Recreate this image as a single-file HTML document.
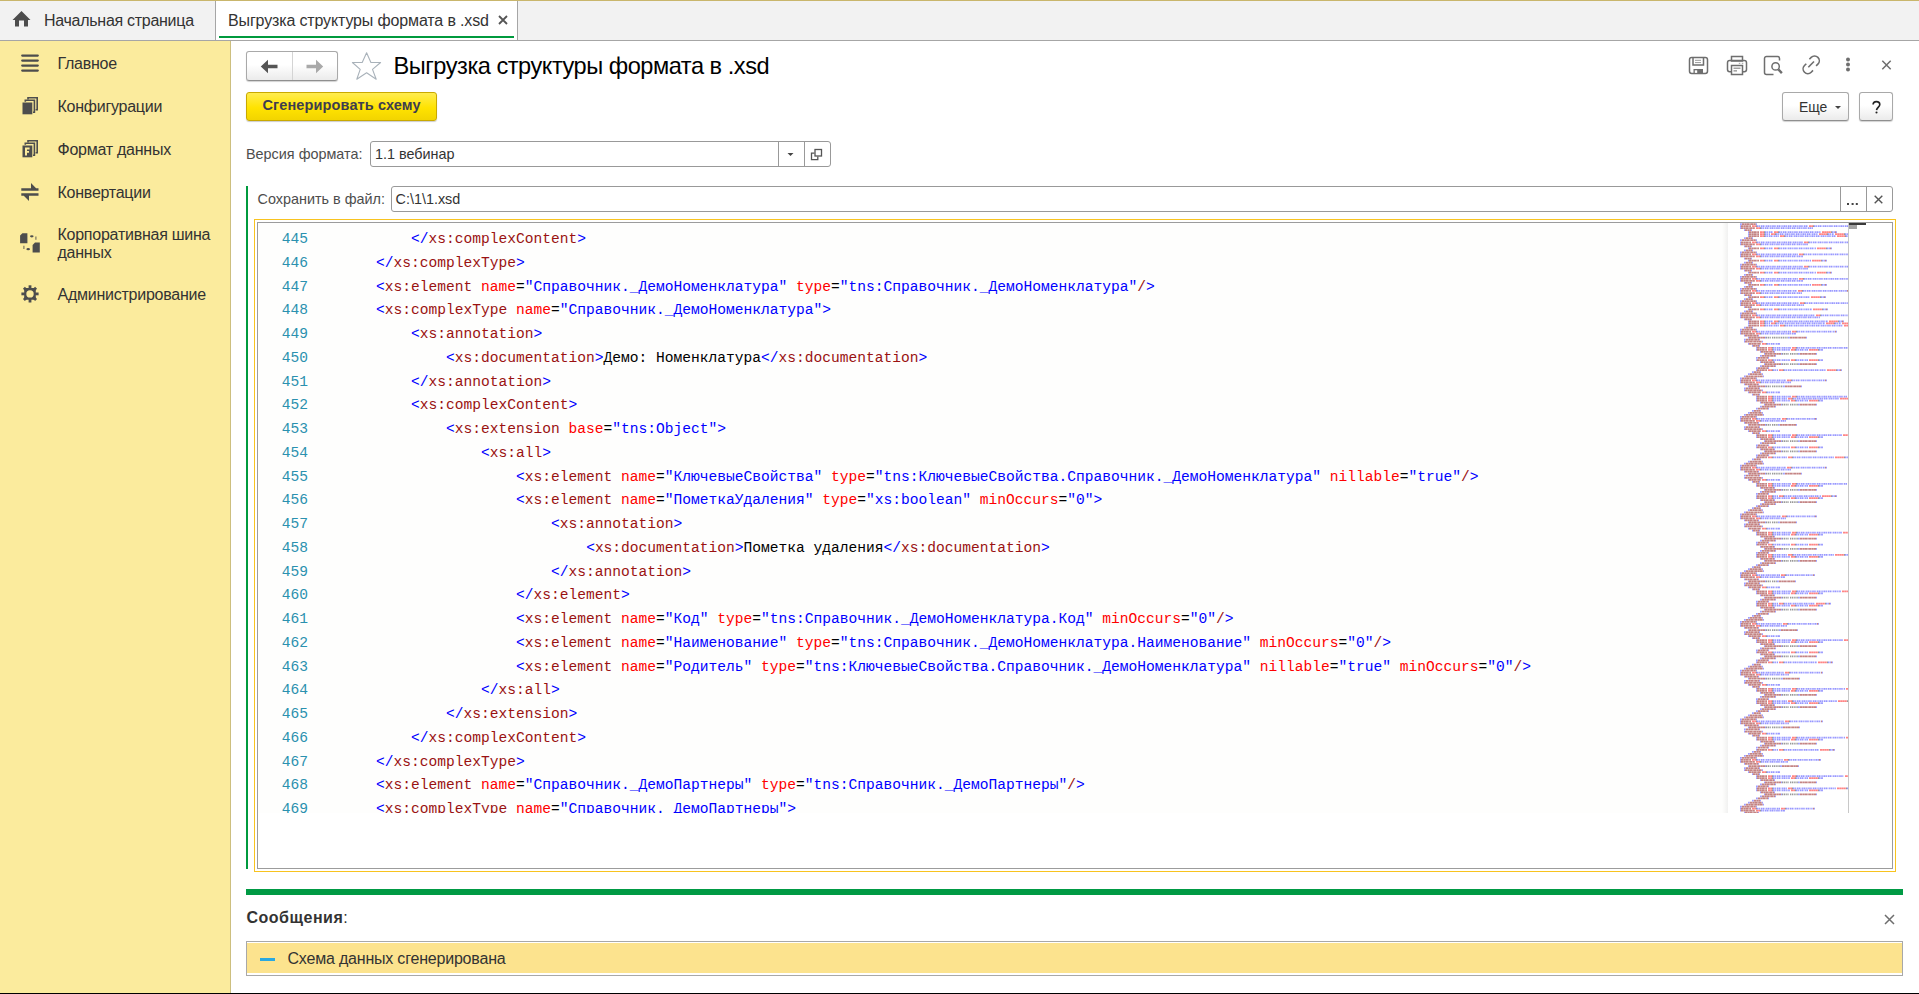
<!DOCTYPE html>
<html><head><meta charset="utf-8">
<style>
*{box-sizing:border-box}
html,body{margin:0;padding:0}
body{width:1919px;height:994px;overflow:hidden;position:relative;background:#fff;font-family:"Liberation Sans",sans-serif;color:#333}
.a{position:absolute}
.t{position:absolute;white-space:pre;line-height:1}
.ln{position:absolute;left:260px;width:48px;text-align:right;font-family:"Liberation Mono",monospace;font-size:14.59px;line-height:17px;color:#2B91AF;white-space:pre}
.cl{position:absolute;font-family:"Liberation Mono",monospace;font-size:14.59px;line-height:17px;white-space:pre;color:#000}
.cl i{font-style:normal}
.xb{color:#0000FF}
.xt{color:#9A1212}
.xa{color:#FF0000}
.xv{color:#0000FF}
.xk{color:#000}
.side{font-size:16px;letter-spacing:-0.25px;color:#333}
.btn{position:absolute;border:1px solid #A9A9A9;border-bottom-color:#8F8F8F;border-radius:3px;background:linear-gradient(#fff 0%,#fff 45%,#EBEBEB 100%);box-shadow:0 1px 1px rgba(0,0,0,0.18)}
</style></head><body>

<!-- top tab bar -->
<div class="a" style="left:0;top:0;width:1919px;height:41px;background:#F2F2F2;border-top:1px solid #C9B66C;border-bottom:1px solid #A6A6A6"></div>
<div class="a" style="left:215px;top:1px;width:1px;height:39px;background:#A6A6A6"></div>
<div class="a" style="left:216px;top:1px;width:301px;height:39px;background:#fff"></div>
<div class="a" style="left:517px;top:1px;width:1px;height:39px;background:#A6A6A6"></div>
<div class="a" style="left:219px;top:36px;width:295px;height:2px;background:#009A3E"></div>
<svg class="a" style="left:12px;top:11px" width="19" height="16" viewBox="0 0 19 16"><path d="M9.5 0 L18.5 9 L16 9 L16 15.5 L12 15.5 L12 9.5 L7 9.5 L7 15.5 L3 15.5 L3 9 L0.5 9 Z" fill="#4D4D4D"/></svg>
<div class="t" style="left:44px;top:12.5px;font-size:16px;letter-spacing:-0.28px;color:#333">Начальная страница</div>
<div class="t" style="left:228px;top:12.5px;font-size:16px;letter-spacing:-0.14px;color:#333">Выгрузка структуры формата в .xsd</div>
<svg class="a" style="left:498px;top:15px" width="10" height="10" viewBox="0 0 10 10"><path d="M1 1 L9 9 M9 1 L1 9" stroke="#555" stroke-width="1.8"/></svg>

<!-- sidebar -->
<div class="a" style="left:0;top:41px;width:231px;height:953px;background:#FBEB9D;border-right:1px solid #CDBF7F"></div>
<svg class="a" style="left:21px;top:54px" width="18" height="18" viewBox="0 0 18 18"><g stroke="#4D4D4D" stroke-width="2.2" stroke-linecap="round"><path d="M1.2 1.6H16.8M1.2 6.6H16.8M1.2 11.6H16.8M1.2 16.6H16.8"/></g></svg>
<div class="t side" style="left:57.5px;top:56.4px">Главное</div>
<svg class="a" style="left:22px;top:97px" width="17" height="18" viewBox="0 0 17 18"><g fill="none" stroke="#4D4D4D" stroke-width="1.6"><path d="M6 2.5V0.8H15.2V12.8H13.6"/><path d="M3.3 4.8V3.3H12.4V15.3H11"/></g><rect x="0.5" y="5.5" width="9.8" height="11.8" fill="#4D4D4D"/></svg>
<div class="t side" style="left:57.5px;top:99.3px">Конфигурации</div>
<svg class="a" style="left:22px;top:140px" width="17" height="18" viewBox="0 0 17 18"><g fill="none" stroke="#4D4D4D" stroke-width="1.6"><path d="M6 2.5V0.8H15.2V12.8H13.6"/><path d="M3.3 4.8V3.3H12.4V15.3H11"/></g><rect x="0.5" y="5.5" width="9.8" height="11.8" fill="#4D4D4D"/><path d="M3 7.5H7.6V9.4H5V10.9H7V12.7H5V15.4H3Z" fill="#FBEB9D"/></svg>
<div class="t side" style="left:57.5px;top:142.4px">Формат данных</div>
<svg class="a" style="left:21px;top:183px" width="18" height="18" viewBox="0 0 18 18"><path d="M0.3 5.3H17.5V7.8H0.3Z M10 0 L17.5 7.8 L10 7.8Z" fill="#4D4D4D"/><path d="M0.3 10.2H17.5V12.7H0.3Z M8 18 L0.3 10.2 L8 10.2Z" fill="#4D4D4D"/></svg>
<div class="t side" style="left:57.5px;top:185.4px">Конвертации</div>
<svg class="a" style="left:20px;top:233px" width="21" height="21" viewBox="0 0 21 21"><g fill="#4D4D4D"><path d="M2.4 0.2H7.4V10.2H0.1V2.6Z"/><path d="M15 9.6H19.8V19.6H12.6V12Z"/><ellipse cx="11.8" cy="3.3" rx="1.8" ry="1.15"/><ellipse cx="8.2" cy="16.2" rx="1.8" ry="1.15"/></g><g stroke="#4D4D4D" stroke-width="1.1" stroke-opacity="0.8"><path d="M15.9 3.6V6.8"/><path d="M3.9 12.8V16"/></g></svg>
<div class="t side" style="left:57.5px;top:227.1px">Корпоративная шина</div>
<div class="t side" style="left:57.5px;top:245.2px">данных</div>
<svg class="a" style="left:21px;top:285px" width="18" height="18" viewBox="0 0 18 18"><g fill="#4D4D4D"><rect x="3.2" y="3.1" width="11.6" height="11.6" rx="1.6"/><g id="gt"><rect x="7.6" y="0.3" width="2.8" height="4.2"/></g><use href="#gt" transform="rotate(45 9 8.9)"/><use href="#gt" transform="rotate(90 9 8.9)"/><use href="#gt" transform="rotate(135 9 8.9)"/><use href="#gt" transform="rotate(180 9 8.9)"/><use href="#gt" transform="rotate(225 9 8.9)"/><use href="#gt" transform="rotate(270 9 8.9)"/><use href="#gt" transform="rotate(315 9 8.9)"/></g><circle cx="9" cy="8.9" r="3.7" fill="#FBEB9D"/></svg>
<div class="t side" style="left:57.5px;top:286.9px">Администрирование</div>

<!-- header of form -->
<div class="btn" style="left:246px;top:51px;width:92px;height:30px"></div>
<div class="a" style="left:292px;top:52px;width:1px;height:28px;background:#D4D4D4"></div>
<svg class="a" style="left:260px;top:59px" width="19" height="15" viewBox="0 0 19 15"><path d="M0.8 7.5 L8 0.8 L8 5.8 L17.5 5.8 L17.5 9.2 L8 9.2 L8 14.2 Z" fill="#555"/></svg>
<svg class="a" style="left:305px;top:59px" width="19" height="15" viewBox="0 0 19 15"><path d="M18.2 7.5 L11 0.8 L11 5.8 L1.5 5.8 L1.5 9.2 L11 9.2 L11 14.2 Z" fill="#A9A9A9"/></svg>
<svg class="a" style="left:351px;top:52px" width="31" height="29" viewBox="0 0 31 29"><path d="M15.6 0.8 L19.9 10.5 L29.6 10.5 L21.5 17.4 L25.2 27.2 L15.6 20.8 L5.8 27.2 L9.2 17.4 L1.4 10.5 L11.2 10.5 Z" fill="none" stroke="#A9B2BA" stroke-width="1.1" stroke-linejoin="round"/></svg>
<div class="t" style="left:393.5px;top:54.8px;font-size:23.6px;letter-spacing:-0.48px;color:#000">Выгрузка структуры формата в .xsd</div>

<!-- right toolbar icons -->
<svg class="a" style="left:1688px;top:56px" width="21" height="19" viewBox="0 0 21 19"><rect x="1.5" y="1.5" width="18" height="16" rx="2.2" fill="none" stroke="#6E6E6E" stroke-width="1.5"/><path d="M5 1.5V9H15.5V1.5" fill="none" stroke="#6E6E6E" stroke-width="1.5"/><path d="M7 4.3H13M7 6.6H13" stroke="#9A9A9A" stroke-width="1"/><rect x="5.5" y="13" width="9.5" height="4.5" fill="#6E6E6E"/><rect x="6.8" y="14.3" width="2.4" height="2.6" fill="#fff"/></svg>
<svg class="a" style="left:1726px;top:55px" width="22" height="21" viewBox="0 0 22 21"><rect x="5.5" y="1.5" width="11" height="4.5" fill="none" stroke="#6E6E6E" stroke-width="1.5"/><rect x="1.5" y="5.5" width="19" height="11.2" rx="2.2" fill="none" stroke="#6E6E6E" stroke-width="1.5"/><rect x="5.5" y="10.5" width="11" height="9" fill="#fff" stroke="#6E6E6E" stroke-width="1.5"/><path d="M7.5 13.2H14.5" stroke="#8A8A8A" stroke-width="1.2"/><path d="M7.5 15.9H11" stroke="#6E6E6E" stroke-width="1"/><path d="M12.8 8.3H14.3M15.8 8.3H17.3" stroke="#9A9A9A" stroke-width="1"/></svg>
<svg class="a" style="left:1763px;top:55px" width="22" height="21" viewBox="0 0 22 21"><path d="M10.5 19.5H3.5A2 2 0 0 1 1.5 17.5V3.5A2 2 0 0 1 3.5 1.5H14.5A2 2 0 0 1 16.5 3.5V5.5" fill="none" stroke="#6E6E6E" stroke-width="1.5"/><circle cx="12.6" cy="11.4" r="3.7" fill="none" stroke="#6E6E6E" stroke-width="1.5"/><path d="M15.3 14.3L18.9 18.1" stroke="#6E6E6E" stroke-width="2.4"/></svg>
<svg class="a" style="left:1801px;top:55px" width="21" height="20" viewBox="0 0 21 20"><g fill="none" stroke="#6E6E6E" stroke-width="1.6" stroke-linecap="butt"><path d="M8.4 4.2 L10.2 2.4 A4.3 4.3 0 0 1 16.9 9.1 L15.1 10.9"/><path d="M12 15.4 L10.2 17.2 A4.3 4.3 0 0 1 3.5 10.5 L5.3 8.7"/><path d="M7.3 12.2 L13 6.5"/></g></svg>
<svg class="a" style="left:1844px;top:55px" width="8" height="19" viewBox="0 0 8 19"><g fill="#6E6E6E"><circle cx="4" cy="4.5" r="2"/><circle cx="4" cy="9.5" r="2"/><circle cx="4" cy="14.5" r="2"/></g></svg>
<svg class="a" style="left:1881px;top:60px" width="11" height="11" viewBox="0 0 11 11"><path d="M1.3 0.8 L9.7 9.2 M9.7 0.8 L1.3 9.2" stroke="#6E6E6E" stroke-width="1.5"/></svg>

<!-- command bar -->
<div class="a" style="left:246px;top:92px;width:191px;height:29px;border:1px solid #C9A900;border-radius:3px;background:linear-gradient(#FFEC4F 0%,#FFE300 55%,#F2D400 100%);box-shadow:0 1px 1px rgba(0,0,0,0.2)"></div>
<div class="t" style="left:262.5px;top:97.9px;font-size:14.5px;font-weight:bold;letter-spacing:0.13px;color:#3D3D4F">Сгенерировать схему</div>

<div class="btn" style="left:1782px;top:92px;width:67px;height:29px"></div>
<div class="t" style="left:1798.5px;top:99.1px;font-size:15.3px;transform:scaleX(0.91);transform-origin:0 0;color:#333">Еще</div>
<svg class="a" style="left:1835px;top:106px" width="6" height="3" viewBox="0 0 6 3"><path d="M0 0H6L3 3Z" fill="#444"/></svg>
<div class="btn" style="left:1859px;top:92px;width:34px;height:29px"></div>
<svg class="a" style="left:1871px;top:100px" width="11" height="15" viewBox="0 0 11 15"><path d="M2.1 4.6C2.1 2.5 3.6 1.6 5.4 1.6C7.4 1.6 8.8 2.8 8.8 4.5C8.8 6.8 5.9 7.3 5.5 10.2" fill="none" stroke="#222" stroke-width="1.6"/><circle cx="5.5" cy="12.5" r="1.05" fill="#222"/></svg>

<!-- version row -->
<div class="t" style="left:246px;top:146.5px;font-size:14.4px;color:#4D4D4D">Версия формата:</div>
<div class="a" style="left:370px;top:141px;width:461px;height:26px;border:1px solid #999;border-radius:3px;background:#fff"></div>
<div class="a" style="left:778px;top:142px;width:1px;height:24px;background:#999"></div>
<div class="a" style="left:804px;top:142px;width:1px;height:24px;background:#999"></div>
<div class="t" style="left:375px;top:146.5px;font-size:14.4px;color:#333">1.1 вебинар</div>
<svg class="a" style="left:787px;top:152px" width="7" height="5" viewBox="0 0 7 5"><path d="M0.5 1H6.5L3.5 4Z" fill="#444"/></svg>
<svg class="a" style="left:810px;top:148px" width="13" height="13" viewBox="0 0 13 13"><rect x="5" y="1.5" width="6.5" height="6.5" fill="none" stroke="#555" stroke-width="1.3"/><path d="M7.8 8.5V11.6H1.5V5.2H4.5" fill="none" stroke="#555" stroke-width="1.3"/></svg>

<!-- save row -->
<div class="a" style="left:246px;top:186px;width:2px;height:683px;background:#009A3E"></div>
<div class="t" style="left:257.5px;top:191.5px;font-size:14.4px;color:#4D4D4D">Сохранить в файл:</div>
<div class="a" style="left:391px;top:186px;width:1502px;height:26px;border:1px solid #999;border-radius:3px;background:#fff"></div>
<div class="a" style="left:1840px;top:187px;width:1px;height:24px;background:#999"></div>
<div class="a" style="left:1866px;top:187px;width:1px;height:24px;background:#999"></div>
<div class="t" style="left:395.5px;top:191.5px;font-size:14.4px;color:#333">C:\1\1.xsd</div>
<svg class="a" style="left:1846px;top:202px" width="13" height="4" viewBox="0 0 13 4"><g fill="#444"><rect x="1" y="1" width="2" height="2"/><rect x="5.6" y="1" width="2" height="2"/><rect x="9.8" y="1" width="2" height="2"/></g></svg>
<svg class="a" style="left:1874px;top:195px" width="9" height="9" viewBox="0 0 9 9"><path d="M0.7 0.7 L8.3 8.3 M8.3 0.7 L0.7 8.3" stroke="#555" stroke-width="1.4"/></svg>

<!-- editor -->
<div class="a" style="left:254px;top:219px;width:1642px;height:653px;border:1px solid #F8C31F"></div>
<div class="a" style="left:257px;top:222px;width:1636px;height:647px;border:1px solid #9C9C9C;background:#fff"></div>
<div class="a" style="left:258px;top:223px;width:1634px;height:4px;background:linear-gradient(rgba(0,0,0,0.05),rgba(0,0,0,0))"></div>
<div class="a" style="left:258px;top:223px;width:1470px;height:590px;overflow:hidden;background:#FEFEFD">
<div class="a" style="left:-258px;top:-223px;width:1919px;height:994px">
<div class="ln" style="top:231.00px">445</div>
<div class="cl" style="top:231.00px;left:411.04px"><i class="xb">&lt;/</i><i class="xt">xs:complexContent</i><i class="xb">&gt;</i></div>
<div class="ln" style="top:254.75px">446</div>
<div class="cl" style="top:254.75px;left:376.02px"><i class="xb">&lt;/</i><i class="xt">xs:complexType</i><i class="xb">&gt;</i></div>
<div class="ln" style="top:278.50px">447</div>
<div class="cl" style="top:278.50px;left:376.02px"><i class="xb">&lt;</i><i class="xt">xs:element</i><i class="xk"> </i><i class="xa">name</i><i class="xk">=</i><i class="xv">"Справочник._ДемоНоменклатура"</i><i class="xk"> </i><i class="xa">type</i><i class="xk">=</i><i class="xv">"tns:Справочник._ДемоНоменклатура"</i><i class="xt">/</i><i class="xb">&gt;</i></div>
<div class="ln" style="top:302.25px">448</div>
<div class="cl" style="top:302.25px;left:376.02px"><i class="xb">&lt;</i><i class="xt">xs:complexType</i><i class="xk"> </i><i class="xa">name</i><i class="xk">=</i><i class="xv">"Справочник._ДемоНоменклатура"</i><i class="xb">&gt;</i></div>
<div class="ln" style="top:326.00px">449</div>
<div class="cl" style="top:326.00px;left:411.04px"><i class="xb">&lt;</i><i class="xt">xs:annotation</i><i class="xb">&gt;</i></div>
<div class="ln" style="top:349.75px">450</div>
<div class="cl" style="top:349.75px;left:446.06px"><i class="xb">&lt;</i><i class="xt">xs:documentation</i><i class="xb">&gt;</i><i class="xk">Демо: Номенклатура</i><i class="xb">&lt;/</i><i class="xt">xs:documentation</i><i class="xb">&gt;</i></div>
<div class="ln" style="top:373.50px">451</div>
<div class="cl" style="top:373.50px;left:411.04px"><i class="xb">&lt;/</i><i class="xt">xs:annotation</i><i class="xb">&gt;</i></div>
<div class="ln" style="top:397.25px">452</div>
<div class="cl" style="top:397.25px;left:411.04px"><i class="xb">&lt;</i><i class="xt">xs:complexContent</i><i class="xb">&gt;</i></div>
<div class="ln" style="top:421.00px">453</div>
<div class="cl" style="top:421.00px;left:446.06px"><i class="xb">&lt;</i><i class="xt">xs:extension</i><i class="xk"> </i><i class="xa">base</i><i class="xk">=</i><i class="xv">"tns:Object"</i><i class="xb">&gt;</i></div>
<div class="ln" style="top:444.75px">454</div>
<div class="cl" style="top:444.75px;left:481.08px"><i class="xb">&lt;</i><i class="xt">xs:all</i><i class="xb">&gt;</i></div>
<div class="ln" style="top:468.50px">455</div>
<div class="cl" style="top:468.50px;left:516.10px"><i class="xb">&lt;</i><i class="xt">xs:element</i><i class="xk"> </i><i class="xa">name</i><i class="xk">=</i><i class="xv">"КлючевыеСвойства"</i><i class="xk"> </i><i class="xa">type</i><i class="xk">=</i><i class="xv">"tns:КлючевыеСвойства.Справочник._ДемоНоменклатура"</i><i class="xk"> </i><i class="xa">nillable</i><i class="xk">=</i><i class="xv">"true"</i><i class="xt">/</i><i class="xb">&gt;</i></div>
<div class="ln" style="top:492.25px">456</div>
<div class="cl" style="top:492.25px;left:516.10px"><i class="xb">&lt;</i><i class="xt">xs:element</i><i class="xk"> </i><i class="xa">name</i><i class="xk">=</i><i class="xv">"ПометкаУдаления"</i><i class="xk"> </i><i class="xa">type</i><i class="xk">=</i><i class="xv">"xs:boolean"</i><i class="xk"> </i><i class="xa">minOccurs</i><i class="xk">=</i><i class="xv">"0"</i><i class="xb">&gt;</i></div>
<div class="ln" style="top:516.00px">457</div>
<div class="cl" style="top:516.00px;left:551.12px"><i class="xb">&lt;</i><i class="xt">xs:annotation</i><i class="xb">&gt;</i></div>
<div class="ln" style="top:539.75px">458</div>
<div class="cl" style="top:539.75px;left:586.14px"><i class="xb">&lt;</i><i class="xt">xs:documentation</i><i class="xb">&gt;</i><i class="xk">Пометка удаления</i><i class="xb">&lt;/</i><i class="xt">xs:documentation</i><i class="xb">&gt;</i></div>
<div class="ln" style="top:563.50px">459</div>
<div class="cl" style="top:563.50px;left:551.12px"><i class="xb">&lt;/</i><i class="xt">xs:annotation</i><i class="xb">&gt;</i></div>
<div class="ln" style="top:587.25px">460</div>
<div class="cl" style="top:587.25px;left:516.10px"><i class="xb">&lt;/</i><i class="xt">xs:element</i><i class="xb">&gt;</i></div>
<div class="ln" style="top:611.00px">461</div>
<div class="cl" style="top:611.00px;left:516.10px"><i class="xb">&lt;</i><i class="xt">xs:element</i><i class="xk"> </i><i class="xa">name</i><i class="xk">=</i><i class="xv">"Код"</i><i class="xk"> </i><i class="xa">type</i><i class="xk">=</i><i class="xv">"tns:Справочник._ДемоНоменклатура.Код"</i><i class="xk"> </i><i class="xa">minOccurs</i><i class="xk">=</i><i class="xv">"0"</i><i class="xt">/</i><i class="xb">&gt;</i></div>
<div class="ln" style="top:634.75px">462</div>
<div class="cl" style="top:634.75px;left:516.10px"><i class="xb">&lt;</i><i class="xt">xs:element</i><i class="xk"> </i><i class="xa">name</i><i class="xk">=</i><i class="xv">"Наименование"</i><i class="xk"> </i><i class="xa">type</i><i class="xk">=</i><i class="xv">"tns:Справочник._ДемоНоменклатура.Наименование"</i><i class="xk"> </i><i class="xa">minOccurs</i><i class="xk">=</i><i class="xv">"0"</i><i class="xt">/</i><i class="xb">&gt;</i></div>
<div class="ln" style="top:658.50px">463</div>
<div class="cl" style="top:658.50px;left:516.10px"><i class="xb">&lt;</i><i class="xt">xs:element</i><i class="xk"> </i><i class="xa">name</i><i class="xk">=</i><i class="xv">"Родитель"</i><i class="xk"> </i><i class="xa">type</i><i class="xk">=</i><i class="xv">"tns:КлючевыеСвойства.Справочник._ДемоНоменклатура"</i><i class="xk"> </i><i class="xa">nillable</i><i class="xk">=</i><i class="xv">"true"</i><i class="xk"> </i><i class="xa">minOccurs</i><i class="xk">=</i><i class="xv">"0"</i><i class="xt">/</i><i class="xb">&gt;</i></div>
<div class="ln" style="top:682.25px">464</div>
<div class="cl" style="top:682.25px;left:481.08px"><i class="xb">&lt;/</i><i class="xt">xs:all</i><i class="xb">&gt;</i></div>
<div class="ln" style="top:706.00px">465</div>
<div class="cl" style="top:706.00px;left:446.06px"><i class="xb">&lt;/</i><i class="xt">xs:extension</i><i class="xb">&gt;</i></div>
<div class="ln" style="top:729.75px">466</div>
<div class="cl" style="top:729.75px;left:411.04px"><i class="xb">&lt;/</i><i class="xt">xs:complexContent</i><i class="xb">&gt;</i></div>
<div class="ln" style="top:753.50px">467</div>
<div class="cl" style="top:753.50px;left:376.02px"><i class="xb">&lt;/</i><i class="xt">xs:complexType</i><i class="xb">&gt;</i></div>
<div class="ln" style="top:777.25px">468</div>
<div class="cl" style="top:777.25px;left:376.02px"><i class="xb">&lt;</i><i class="xt">xs:element</i><i class="xk"> </i><i class="xa">name</i><i class="xk">=</i><i class="xv">"Справочник._ДемоПартнеры"</i><i class="xk"> </i><i class="xa">type</i><i class="xk">=</i><i class="xv">"tns:Справочник._ДемоПартнеры"</i><i class="xt">/</i><i class="xb">&gt;</i></div>
<div class="ln" style="top:801.00px">469</div>
<div class="cl" style="top:801.00px;left:376.02px"><i class="xb">&lt;</i><i class="xt">xs:complexType</i><i class="xk"> </i><i class="xa">name</i><i class="xk">=</i><i class="xv">"Справочник._ДемоПартнеры"</i><i class="xb">&gt;</i></div>
</div>
</div>
<!-- minimap -->
<div class="a" style="left:1722px;top:223px;width:6px;height:590px;background:linear-gradient(90deg,rgba(0,0,0,0),rgba(0,0,0,0.05))"></div>
<div class="a" style="left:1728px;top:223px;width:121px;height:590px;background:#fff;border-right:1px solid #C8C8C8;overflow:hidden"><svg width="121" height="590" viewBox="0 0 121 590" style="position:absolute;left:0;top:0"><path d="M12 1.00h2M28 1.00h1M12 3.03h1M12 5.06h1M84 5.06h1M16 7.09h1M23 7.09h1M20 9.12h1M108 9.12h1M20 11.15h1M20 13.18h1M16 15.21h2M24 15.21h1M12 17.24h2M28 17.24h1M12 19.27h1M12 21.30h1M79 21.30h1M16 23.33h1M23 23.33h1M20 25.36h1M103 25.36h1M16 27.39h2M24 27.39h1M12 29.42h2M28 29.42h1M12 31.45h1M12 33.48h1M74 33.48h1M16 35.51h1M23 35.51h1M20 37.54h1M98 37.54h1M16 39.57h2M24 39.57h1M12 41.60h2M28 41.60h1M12 43.63h1M12 45.66h1M79 45.66h1M16 47.69h1M23 47.69h1M20 49.72h1M103 49.72h1M16 51.75h2M24 51.75h1M12 53.78h2M28 53.78h1M12 55.81h1M12 57.84h1M74 57.84h1M16 59.87h1M23 59.87h1M20 61.90h1M98 61.90h1M16 63.93h2M24 63.93h1M12 65.96h2M28 65.96h1M12 67.99h1M120 67.99h1M12 70.02h1M73 70.02h1M16 72.05h1M23 72.05h1M20 74.08h1M97 74.08h1M16 76.11h2M24 76.11h1M12 78.14h2M28 78.14h1M12 80.17h1M12 82.20h1M75 82.20h1M16 84.23h1M23 84.23h1M20 86.26h1M99 86.26h1M16 88.29h2M24 88.29h1M12 90.32h2M28 90.32h1M12 92.35h1M12 94.38h1M91 94.38h1M16 96.41h1M23 96.41h1M20 98.44h1M115 98.44h1M20 100.47h1M20 102.50h1M16 104.53h2M24 104.53h1M12 106.56h2M28 106.56h1M12 108.59h1M108 108.59h1M12 110.62h1M67 110.62h1M16 112.65h1M30 112.65h1M20 114.68h1M37 114.68h1M60 114.68h2M78 114.68h1M16 116.71h2M31 116.71h1M16 118.74h1M34 118.74h1M20 120.77h1M51 120.77h1M24 122.80h1M31 122.80h1M28 124.83h1M28 126.86h1M94 126.86h1M32 128.89h1M46 128.89h1M36 130.92h1M53 130.92h1M70 130.92h2M88 130.92h1M32 132.95h2M47 132.95h1M28 134.98h2M40 134.98h1M28 137.01h1M94 137.01h1M32 139.04h1M46 139.04h1M36 141.07h1M53 141.07h1M70 141.07h2M88 141.07h1M32 143.10h2M47 143.10h1M28 145.13h2M40 145.13h1M28 147.16h1M113 147.16h1M24 149.19h2M32 149.19h1M20 151.22h2M34 151.22h1M16 153.25h2M35 153.25h1M12 155.28h2M28 155.28h1M12 157.31h1M98 157.31h1M12 159.34h1M62 159.34h1M16 161.37h1M30 161.37h1M20 163.40h1M37 163.40h1M55 163.40h2M73 163.40h1M16 165.43h2M31 165.43h1M16 167.46h1M34 167.46h1M20 169.49h1M51 169.49h1M24 171.52h1M31 171.52h1M28 173.55h1M28 175.58h1M28 177.61h1M94 177.61h1M32 179.64h1M46 179.64h1M36 181.67h1M53 181.67h1M70 181.67h2M88 181.67h1M32 183.70h2M47 183.70h1M28 185.73h2M40 185.73h1M24 187.76h2M32 187.76h1M20 189.79h2M34 189.79h1M16 191.82h2M35 191.82h1M12 193.85h2M28 193.85h1M12 195.88h1M88 195.88h1M12 197.91h1M57 197.91h1M16 199.94h1M30 199.94h1M20 201.97h1M37 201.97h1M50 201.97h2M68 201.97h1M16 204.00h2M31 204.00h1M16 206.03h1M34 206.03h1M20 208.06h1M51 208.06h1M24 210.09h1M31 210.09h1M28 212.12h1M28 214.15h1M94 214.15h1M32 216.18h1M46 216.18h1M36 218.21h1M53 218.21h1M70 218.21h2M88 218.21h1M32 220.24h2M47 220.24h1M28 222.27h2M40 222.27h1M28 224.30h1M94 224.30h1M32 226.33h1M46 226.33h1M36 228.36h1M53 228.36h1M70 228.36h2M88 228.36h1M32 230.39h2M47 230.39h1M28 232.42h2M40 232.42h1M28 234.45h1M24 236.48h2M32 236.48h1M20 238.51h2M34 238.51h1M16 240.54h2M35 240.54h1M12 242.57h2M28 242.57h1M12 244.60h1M98 244.60h1M12 246.63h1M62 246.63h1M16 248.66h1M30 248.66h1M20 250.69h1M37 250.69h1M55 250.69h2M73 250.69h1M16 252.72h2M31 252.72h1M16 254.75h1M34 254.75h1M20 256.78h1M51 256.78h1M24 258.81h1M31 258.81h1M28 260.84h1M28 262.87h1M94 262.87h1M32 264.90h1M46 264.90h1M36 266.93h1M53 266.93h1M70 266.93h2M88 266.93h1M32 268.96h2M47 268.96h1M28 270.99h2M40 270.99h1M28 273.02h1M108 273.02h1M28 275.05h1M94 275.05h1M32 277.08h1M46 277.08h1M36 279.11h1M53 279.11h1M70 279.11h2M88 279.11h1M32 281.14h2M47 281.14h1M28 283.17h2M40 283.17h1M24 285.20h2M32 285.20h1M20 287.23h2M34 287.23h1M16 289.26h2M35 289.26h1M12 291.29h2M28 291.29h1M12 293.32h1M88 293.32h1M12 295.35h1M57 295.35h1M16 297.38h1M30 297.38h1M20 299.41h1M37 299.41h1M50 299.41h2M68 299.41h1M16 301.44h2M31 301.44h1M16 303.47h1M34 303.47h1M20 305.50h1M51 305.50h1M24 307.53h1M31 307.53h1M28 309.56h1M28 311.59h1M94 311.59h1M32 313.62h1M46 313.62h1M36 315.65h1M53 315.65h1M70 315.65h2M88 315.65h1M32 317.68h2M47 317.68h1M28 319.71h2M40 319.71h1M28 321.74h1M94 321.74h1M32 323.77h1M46 323.77h1M36 325.80h1M53 325.80h1M70 325.80h2M88 325.80h1M32 327.83h2M47 327.83h1M28 329.86h2M40 329.86h1M28 331.89h1M28 333.92h1M94 333.92h1M32 335.95h1M46 335.95h1M36 337.98h1M53 337.98h1M70 337.98h2M88 337.98h1M32 340.01h2M47 340.01h1M28 342.04h2M40 342.04h1M24 344.07h2M32 344.07h1M20 346.10h2M34 346.10h1M16 348.13h2M35 348.13h1M12 350.16h2M28 350.16h1M12 352.19h1M86 352.19h1M12 354.22h1M56 354.22h1M16 356.25h1M30 356.25h1M20 358.28h1M37 358.28h1M49 358.28h2M67 358.28h1M16 360.31h2M31 360.31h1M16 362.34h1M34 362.34h1M20 364.37h1M51 364.37h1M24 366.40h1M31 366.40h1M28 368.43h1M28 370.46h1M94 370.46h1M32 372.49h1M46 372.49h1M36 374.52h1M53 374.52h1M70 374.52h2M88 374.52h1M32 376.55h2M47 376.55h1M28 378.58h2M40 378.58h1M28 380.61h1M102 380.61h1M28 382.64h1M94 382.64h1M32 384.67h1M46 384.67h1M36 386.70h1M53 386.70h1M70 386.70h2M88 386.70h1M32 388.73h2M47 388.73h1M28 390.76h2M40 390.76h1M24 392.79h2M32 392.79h1M20 394.82h2M34 394.82h1M16 396.85h2M35 396.85h1M12 398.88h2M28 398.88h1M12 400.91h1M90 400.91h1M12 402.94h1M58 402.94h1M16 404.97h1M30 404.97h1M20 407.00h1M37 407.00h1M51 407.00h2M69 407.00h1M16 409.03h2M31 409.03h1M16 411.06h1M34 411.06h1M20 413.09h1M51 413.09h1M24 415.12h1M31 415.12h1M28 417.15h1M28 419.18h1M94 419.18h1M32 421.21h1M46 421.21h1M36 423.24h1M53 423.24h1M70 423.24h2M88 423.24h1M32 425.27h2M47 425.27h1M28 427.30h2M40 427.30h1M28 429.33h1M94 429.33h1M32 431.36h1M46 431.36h1M36 433.39h1M53 433.39h1M70 433.39h2M88 433.39h1M32 435.42h2M47 435.42h1M28 437.45h2M40 437.45h1M28 439.48h1M104 439.48h1M24 441.51h2M32 441.51h1M20 443.54h2M34 443.54h1M16 445.57h2M35 445.57h1M12 447.60h2M28 447.60h1M12 449.63h1M94 449.63h1M12 451.66h1M60 451.66h1M16 453.69h1M30 453.69h1M20 455.72h1M37 455.72h1M53 455.72h2M71 455.72h1M16 457.75h2M31 457.75h1M16 459.78h1M34 459.78h1M20 461.81h1M51 461.81h1M24 463.84h1M31 463.84h1M28 465.87h1M28 467.90h1M94 467.90h1M32 469.93h1M46 469.93h1M36 471.96h1M53 471.96h1M70 471.96h2M88 471.96h1M32 473.99h2M47 473.99h1M28 476.02h2M40 476.02h1M28 478.05h1M28 480.08h1M94 480.08h1M32 482.11h1M46 482.11h1M36 484.14h1M53 484.14h1M70 484.14h2M88 484.14h1M32 486.17h2M47 486.17h1M28 488.20h2M40 488.20h1M24 490.23h2M32 490.23h1M20 492.26h2M34 492.26h1M16 494.29h2M35 494.29h1M12 496.32h2M28 496.32h1M12 498.35h1M94 498.35h1M12 500.38h1M60 500.38h1M16 502.41h1M30 502.41h1M20 504.44h1M37 504.44h1M53 504.44h2M71 504.44h1M16 506.47h2M31 506.47h1M16 508.50h1M34 508.50h1M20 510.53h1M51 510.53h1M24 512.56h1M31 512.56h1M28 514.59h1M28 516.62h1M94 516.62h1M32 518.65h1M46 518.65h1M36 520.68h1M53 520.68h1M70 520.68h2M88 520.68h1M32 522.71h2M47 522.71h1M28 524.74h2M40 524.74h1M28 526.77h1M106 526.77h1M24 528.80h2M32 528.80h1M20 530.83h2M34 530.83h1M16 532.86h2M35 532.86h1M12 534.89h2M28 534.89h1M12 536.92h1M92 536.92h1M12 538.95h1M59 538.95h1M16 540.98h1M30 540.98h1M20 543.01h1M37 543.01h1M52 543.01h2M70 543.01h1M16 545.04h2M31 545.04h1M16 547.07h1M34 547.07h1M20 549.10h1M51 549.10h1M24 551.13h1M31 551.13h1M28 553.16h1M28 555.19h1M94 555.19h1M32 557.22h1M46 557.22h1M36 559.25h1M53 559.25h1M70 559.25h2M88 559.25h1M32 561.28h2M47 561.28h1M28 563.31h2M40 563.31h1M28 565.34h1M28 567.37h1M94 567.37h1M32 569.40h1M46 569.40h1M36 571.43h1M53 571.43h1M70 571.43h2M88 571.43h1M32 573.46h2M47 573.46h1M28 575.49h2M40 575.49h1M24 577.52h2M32 577.52h1M20 579.55h2M34 579.55h1M16 581.58h2M35 581.58h1M12 583.61h2M28 583.61h1M12 585.64h1M86 585.64h1M12 587.67h1M56 587.67h1M16 589.70h1M30 589.70h1" stroke="#4040ff" stroke-opacity="0.5" stroke-width="1.75" stroke-dasharray="1 0.2" fill="none"/><path d="M14 1.00h14M13 3.03h10M13 5.06h14M17 7.09h6M21 9.12h10M107 9.12h1M21 11.15h10M120 11.15h1M21 13.18h10M18 15.21h6M14 17.24h14M13 19.27h10M13 21.30h14M17 23.33h6M21 25.36h10M102 25.36h1M18 27.39h6M14 29.42h14M13 31.45h10M13 33.48h14M17 35.51h6M21 37.54h10M97 37.54h1M18 39.57h6M14 41.60h14M13 43.63h10M13 45.66h14M17 47.69h6M21 49.72h10M102 49.72h1M18 51.75h6M14 53.78h14M13 55.81h10M13 57.84h14M17 59.87h6M21 61.90h10M97 61.90h1M18 63.93h6M14 65.96h14M13 67.99h10M119 67.99h1M13 70.02h14M17 72.05h6M21 74.08h10M96 74.08h1M18 76.11h6M14 78.14h14M13 80.17h10M13 82.20h14M17 84.23h6M21 86.26h10M98 86.26h1M18 88.29h6M14 90.32h14M13 92.35h10M13 94.38h14M17 96.41h6M21 98.44h10M114 98.44h1M21 100.47h10M21 102.50h10M18 104.53h6M14 106.56h14M13 108.59h10M107 108.59h1M13 110.62h14M17 112.65h13M21 114.68h16M62 114.68h16M18 116.71h13M17 118.74h17M21 120.77h12M25 122.80h6M29 124.83h10M29 126.86h10M33 128.89h13M37 130.92h16M72 130.92h16M34 132.95h13M30 134.98h10M29 137.01h10M33 139.04h13M37 141.07h16M72 141.07h16M34 143.10h13M30 145.13h10M29 147.16h10M112 147.16h1M26 149.19h6M22 151.22h12M18 153.25h17M14 155.28h14M13 157.31h10M97 157.31h1M13 159.34h14M17 161.37h13M21 163.40h16M57 163.40h16M18 165.43h13M17 167.46h17M21 169.49h12M25 171.52h6M29 173.55h10M29 175.58h10M29 177.61h10M33 179.64h13M37 181.67h16M72 181.67h16M34 183.70h13M30 185.73h10M26 187.76h6M22 189.79h12M18 191.82h17M14 193.85h14M13 195.88h10M87 195.88h1M13 197.91h14M17 199.94h13M21 201.97h16M52 201.97h16M18 204.00h13M17 206.03h17M21 208.06h12M25 210.09h6M29 212.12h10M29 214.15h10M33 216.18h13M37 218.21h16M72 218.21h16M34 220.24h13M30 222.27h10M29 224.30h10M33 226.33h13M37 228.36h16M72 228.36h16M34 230.39h13M30 232.42h10M29 234.45h10M120 234.45h1M26 236.48h6M22 238.51h12M18 240.54h17M14 242.57h14M13 244.60h10M97 244.60h1M13 246.63h14M17 248.66h13M21 250.69h16M57 250.69h16M18 252.72h13M17 254.75h17M21 256.78h12M25 258.81h6M29 260.84h10M29 262.87h10M33 264.90h13M37 266.93h16M72 266.93h16M34 268.96h13M30 270.99h10M29 273.02h10M107 273.02h1M29 275.05h10M33 277.08h13M37 279.11h16M72 279.11h16M34 281.14h13M30 283.17h10M26 285.20h6M22 287.23h12M18 289.26h17M14 291.29h14M13 293.32h10M87 293.32h1M13 295.35h14M17 297.38h13M21 299.41h16M52 299.41h16M18 301.44h13M17 303.47h17M21 305.50h12M25 307.53h6M29 309.56h10M29 311.59h10M33 313.62h13M37 315.65h16M72 315.65h16M34 317.68h13M30 319.71h10M29 321.74h10M33 323.77h13M37 325.80h16M72 325.80h16M34 327.83h13M30 329.86h10M29 331.89h10M120 331.89h1M29 333.92h10M33 335.95h13M37 337.98h16M72 337.98h16M34 340.01h13M30 342.04h10M26 344.07h6M22 346.10h12M18 348.13h17M14 350.16h14M13 352.19h10M85 352.19h1M13 354.22h14M17 356.25h13M21 358.28h16M51 358.28h16M18 360.31h13M17 362.34h17M21 364.37h12M25 366.40h6M29 368.43h10M29 370.46h10M33 372.49h13M37 374.52h16M72 374.52h16M34 376.55h13M30 378.58h10M29 380.61h10M101 380.61h1M29 382.64h10M33 384.67h13M37 386.70h16M72 386.70h16M34 388.73h13M30 390.76h10M26 392.79h6M22 394.82h12M18 396.85h17M14 398.88h14M13 400.91h10M89 400.91h1M13 402.94h14M17 404.97h13M21 407.00h16M53 407.00h16M18 409.03h13M17 411.06h17M21 413.09h12M25 415.12h6M29 417.15h10M29 419.18h10M33 421.21h13M37 423.24h16M72 423.24h16M34 425.27h13M30 427.30h10M29 429.33h10M33 431.36h13M37 433.39h16M72 433.39h16M34 435.42h13M30 437.45h10M29 439.48h10M103 439.48h1M26 441.51h6M22 443.54h12M18 445.57h17M14 447.60h14M13 449.63h10M93 449.63h1M13 451.66h14M17 453.69h13M21 455.72h16M55 455.72h16M18 457.75h13M17 459.78h17M21 461.81h12M25 463.84h6M29 465.87h10M29 467.90h10M33 469.93h13M37 471.96h16M72 471.96h16M34 473.99h13M30 476.02h10M29 478.05h10M29 480.08h10M33 482.11h13M37 484.14h16M72 484.14h16M34 486.17h13M30 488.20h10M26 490.23h6M22 492.26h12M18 494.29h17M14 496.32h14M13 498.35h10M93 498.35h1M13 500.38h14M17 502.41h13M21 504.44h16M55 504.44h16M18 506.47h13M17 508.50h17M21 510.53h12M25 512.56h6M29 514.59h10M29 516.62h10M33 518.65h13M37 520.68h16M72 520.68h16M34 522.71h13M30 524.74h10M29 526.77h10M105 526.77h1M26 528.80h6M22 530.83h12M18 532.86h17M14 534.89h14M13 536.92h10M91 536.92h1M13 538.95h14M17 540.98h13M21 543.01h16M54 543.01h16M18 545.04h13M17 547.07h17M21 549.10h12M25 551.13h6M29 553.16h10M29 555.19h10M33 557.22h13M37 559.25h16M72 559.25h16M34 561.28h13M30 563.31h10M29 565.34h10M29 567.37h10M33 569.40h13M37 571.43h16M72 571.43h16M34 573.46h13M30 575.49h10M26 577.52h6M22 579.55h12M18 581.58h17M14 583.61h14M13 585.64h10M85 585.64h1M13 587.67h14M17 589.70h13" stroke="#a84a4a" stroke-opacity="0.68" stroke-width="1.75" stroke-dasharray="2.5 0.3 1.5 0.2" fill="none"/><path d="M24 3.03h4M81 3.03h4M28 5.06h4M32 9.12h4M46 9.12h4M94 9.12h9M32 11.15h4M43 11.15h4M91 11.15h8M107 11.15h9M32 13.18h4M52 13.18h4M109 13.18h8M24 19.27h4M76 19.27h4M28 21.30h4M32 25.36h4M46 25.36h4M89 25.36h9M24 31.45h4M71 31.45h4M28 33.48h4M32 37.54h4M46 37.54h4M84 37.54h9M24 43.63h4M76 43.63h4M28 45.66h4M32 49.72h4M46 49.72h4M89 49.72h9M24 55.81h4M71 55.81h4M28 57.84h4M32 61.90h4M46 61.90h4M84 61.90h9M24 67.99h4M70 67.99h4M28 70.02h4M32 74.08h4M46 74.08h4M83 74.08h9M24 80.17h4M72 80.17h4M28 82.20h4M32 86.26h4M46 86.26h4M85 86.26h9M24 92.35h4M88 92.35h4M28 94.38h4M32 98.44h4M46 98.44h4M101 98.44h9M32 100.47h4M43 100.47h4M98 100.47h8M114 100.47h7M32 102.50h4M52 102.50h4M116 102.50h5M24 108.59h4M64 108.59h4M28 110.62h4M34 120.77h4M40 124.83h4M64 124.83h4M40 126.86h4M63 126.86h4M81 126.86h9M40 137.01h4M63 137.01h4M81 137.01h9M40 147.16h4M51 147.16h4M99 147.16h9M24 157.31h4M59 157.31h4M28 159.34h4M34 169.49h4M40 173.55h4M64 173.55h4M120 173.55h1M40 175.58h4M60 175.58h4M112 175.58h9M40 177.61h4M63 177.61h4M81 177.61h9M24 195.88h4M54 195.88h4M28 197.91h4M34 208.06h4M40 212.12h4M64 212.12h4M115 212.12h6M40 214.15h4M63 214.15h4M81 214.15h9M40 224.30h4M63 224.30h4M81 224.30h9M40 234.45h4M60 234.45h4M107 234.45h9M24 244.60h4M59 244.60h4M28 246.63h4M34 256.78h4M40 260.84h4M64 260.84h4M120 260.84h1M40 262.87h4M63 262.87h4M81 262.87h9M40 273.02h4M51 273.02h4M94 273.02h9M40 275.05h4M63 275.05h4M81 275.05h9M24 293.32h4M54 293.32h4M28 295.35h4M34 305.50h4M40 309.56h4M64 309.56h4M115 309.56h6M40 311.59h4M63 311.59h4M81 311.59h9M40 321.74h4M63 321.74h4M81 321.74h9M40 331.89h4M60 331.89h4M107 331.89h9M40 333.92h4M63 333.92h4M81 333.92h9M24 352.19h4M53 352.19h4M28 354.22h4M34 364.37h4M40 368.43h4M64 368.43h4M114 368.43h7M40 370.46h4M63 370.46h4M81 370.46h9M40 380.61h4M51 380.61h4M88 380.61h9M40 382.64h4M63 382.64h4M81 382.64h9M24 400.91h4M55 400.91h4M28 402.94h4M34 413.09h4M40 417.15h4M64 417.15h4M116 417.15h5M40 419.18h4M63 419.18h4M81 419.18h9M40 429.33h4M63 429.33h4M81 429.33h9M40 439.48h4M51 439.48h4M90 439.48h9M24 449.63h4M57 449.63h4M28 451.66h4M34 461.81h4M40 465.87h4M64 465.87h4M118 465.87h3M40 467.90h4M63 467.90h4M81 467.90h9M40 478.05h4M60 478.05h4M110 478.05h9M40 480.08h4M63 480.08h4M81 480.08h9M24 498.35h4M57 498.35h4M28 500.38h4M34 510.53h4M40 514.59h4M64 514.59h4M118 514.59h3M40 516.62h4M63 516.62h4M81 516.62h9M40 526.77h4M51 526.77h4M92 526.77h9M24 536.92h4M56 536.92h4M28 538.95h4M34 549.10h4M40 553.16h4M64 553.16h4M117 553.16h4M40 555.19h4M63 555.19h4M81 555.19h9M40 565.34h4M60 565.34h4M109 565.34h9M40 567.37h4M63 567.37h4M81 567.37h9M24 585.64h4M53 585.64h4M28 587.67h4" stroke="#ff3a3a" stroke-opacity="0.62" stroke-width="1.75" stroke-dasharray="2 0.2" fill="none"/><path d="M29 3.03h51M86 3.03h35M33 5.06h51M37 9.12h8M51 9.12h42M104 9.12h3M37 11.15h5M48 11.15h42M100 11.15h6M117 11.15h3M37 13.18h14M57 13.18h51M118 13.18h3M29 19.27h46M81 19.27h40M33 21.30h46M37 25.36h8M51 25.36h37M99 25.36h3M29 31.45h41M76 31.45h45M33 33.48h41M37 37.54h8M51 37.54h32M94 37.54h3M29 43.63h46M81 43.63h40M33 45.66h46M37 49.72h8M51 49.72h37M99 49.72h3M29 55.81h41M76 55.81h45M33 57.84h41M37 61.90h8M51 61.90h32M94 61.90h3M29 67.99h40M75 67.99h44M33 70.02h40M37 74.08h8M51 74.08h31M93 74.08h3M29 80.17h42M77 80.17h44M33 82.20h42M37 86.26h8M51 86.26h33M95 86.26h3M29 92.35h58M93 92.35h28M33 94.38h58M37 98.44h8M51 98.44h49M111 98.44h3M37 100.47h5M48 100.47h49M107 100.47h6M37 102.50h14M57 102.50h58M29 108.59h34M69 108.59h38M33 110.62h34M39 120.77h12M45 124.83h18M69 124.83h52M45 126.86h17M68 126.86h12M91 126.86h3M45 137.01h17M68 137.01h12M91 137.01h3M45 147.16h5M56 147.16h42M109 147.16h3M29 157.31h29M64 157.31h33M33 159.34h29M39 169.49h12M45 173.55h18M69 173.55h50M45 175.58h14M65 175.58h46M45 177.61h17M68 177.61h12M91 177.61h3M29 195.88h24M59 195.88h28M33 197.91h24M39 208.06h12M45 212.12h18M69 212.12h45M45 214.15h17M68 214.15h12M91 214.15h3M45 224.30h17M68 224.30h12M91 224.30h3M45 234.45h14M65 234.45h41M117 234.45h3M29 244.60h29M64 244.60h33M33 246.63h29M39 256.78h12M45 260.84h18M69 260.84h50M45 262.87h17M68 262.87h12M91 262.87h3M45 273.02h5M56 273.02h37M104 273.02h3M45 275.05h17M68 275.05h12M91 275.05h3M29 293.32h24M59 293.32h28M33 295.35h24M39 305.50h12M45 309.56h18M69 309.56h45M45 311.59h17M68 311.59h12M91 311.59h3M45 321.74h17M68 321.74h12M91 321.74h3M45 331.89h14M65 331.89h41M117 331.89h3M45 333.92h17M68 333.92h12M91 333.92h3M29 352.19h23M58 352.19h27M33 354.22h23M39 364.37h12M45 368.43h18M69 368.43h44M45 370.46h17M68 370.46h12M91 370.46h3M45 380.61h5M56 380.61h31M98 380.61h3M45 382.64h17M68 382.64h12M91 382.64h3M29 400.91h25M60 400.91h29M33 402.94h25M39 413.09h12M45 417.15h18M69 417.15h46M45 419.18h17M68 419.18h12M91 419.18h3M45 429.33h17M68 429.33h12M91 429.33h3M45 439.48h5M56 439.48h33M100 439.48h3M29 449.63h27M62 449.63h31M33 451.66h27M39 461.81h12M45 465.87h18M69 465.87h48M45 467.90h17M68 467.90h12M91 467.90h3M45 478.05h14M65 478.05h44M120 478.05h1M45 480.08h17M68 480.08h12M91 480.08h3M29 498.35h27M62 498.35h31M33 500.38h27M39 510.53h12M45 514.59h18M69 514.59h48M45 516.62h17M68 516.62h12M91 516.62h3M45 526.77h5M56 526.77h35M102 526.77h3M29 536.92h26M61 536.92h30M33 538.95h26M39 549.10h12M45 553.16h18M69 553.16h47M45 555.19h17M68 555.19h12M91 555.19h3M45 565.34h14M65 565.34h43M119 565.34h2M45 567.37h17M68 567.37h12M91 567.37h3M29 585.64h23M58 585.64h27M33 587.67h23" stroke="#3030ff" stroke-opacity="0.5" stroke-width="1.75" stroke-dasharray="1.6 0.5 0.9 0.7 1.3 0.4" fill="none"/><path d="M28 3.03h1M85 3.03h1M32 5.06h1M36 9.12h1M50 9.12h1M103 9.12h1M36 11.15h1M47 11.15h1M99 11.15h1M116 11.15h1M36 13.18h1M56 13.18h1M117 13.18h1M28 19.27h1M80 19.27h1M32 21.30h1M36 25.36h1M50 25.36h1M98 25.36h1M28 31.45h1M75 31.45h1M32 33.48h1M36 37.54h1M50 37.54h1M93 37.54h1M28 43.63h1M80 43.63h1M32 45.66h1M36 49.72h1M50 49.72h1M98 49.72h1M28 55.81h1M75 55.81h1M32 57.84h1M36 61.90h1M50 61.90h1M93 61.90h1M28 67.99h1M74 67.99h1M32 70.02h1M36 74.08h1M50 74.08h1M92 74.08h1M28 80.17h1M76 80.17h1M32 82.20h1M36 86.26h1M50 86.26h1M94 86.26h1M28 92.35h1M92 92.35h1M32 94.38h1M36 98.44h1M50 98.44h1M110 98.44h1M36 100.47h1M47 100.47h1M106 100.47h1M36 102.50h1M56 102.50h1M28 108.59h1M68 108.59h1M32 110.62h1M38 114.68h5M44 114.68h16M38 120.77h1M44 124.83h1M68 124.83h1M44 126.86h1M67 126.86h1M90 126.86h1M54 130.92h7M62 130.92h8M44 137.01h1M67 137.01h1M90 137.01h1M54 141.07h7M62 141.07h8M44 147.16h1M55 147.16h1M108 147.16h1M28 157.31h1M63 157.31h1M32 159.34h1M38 163.40h5M44 163.40h11M38 169.49h1M44 173.55h1M68 173.55h1M44 175.58h1M64 175.58h1M44 177.61h1M67 177.61h1M90 177.61h1M54 181.67h7M62 181.67h8M28 195.88h1M58 195.88h1M32 197.91h1M38 201.97h5M44 201.97h6M38 208.06h1M44 212.12h1M68 212.12h1M44 214.15h1M67 214.15h1M90 214.15h1M54 218.21h7M62 218.21h8M44 224.30h1M67 224.30h1M90 224.30h1M54 228.36h7M62 228.36h8M44 234.45h1M64 234.45h1M116 234.45h1M28 244.60h1M63 244.60h1M32 246.63h1M38 250.69h5M44 250.69h11M38 256.78h1M44 260.84h1M68 260.84h1M44 262.87h1M67 262.87h1M90 262.87h1M54 266.93h7M62 266.93h8M44 273.02h1M55 273.02h1M103 273.02h1M44 275.05h1M67 275.05h1M90 275.05h1M54 279.11h7M62 279.11h8M28 293.32h1M58 293.32h1M32 295.35h1M38 299.41h5M44 299.41h6M38 305.50h1M44 309.56h1M68 309.56h1M44 311.59h1M67 311.59h1M90 311.59h1M54 315.65h7M62 315.65h8M44 321.74h1M67 321.74h1M90 321.74h1M54 325.80h7M62 325.80h8M44 331.89h1M64 331.89h1M116 331.89h1M44 333.92h1M67 333.92h1M90 333.92h1M54 337.98h7M62 337.98h8M28 352.19h1M57 352.19h1M32 354.22h1M38 358.28h5M44 358.28h5M38 364.37h1M44 368.43h1M68 368.43h1M44 370.46h1M67 370.46h1M90 370.46h1M54 374.52h7M62 374.52h8M44 380.61h1M55 380.61h1M97 380.61h1M44 382.64h1M67 382.64h1M90 382.64h1M54 386.70h7M62 386.70h8M28 400.91h1M59 400.91h1M32 402.94h1M38 407.00h5M44 407.00h7M38 413.09h1M44 417.15h1M68 417.15h1M44 419.18h1M67 419.18h1M90 419.18h1M54 423.24h7M62 423.24h8M44 429.33h1M67 429.33h1M90 429.33h1M54 433.39h7M62 433.39h8M44 439.48h1M55 439.48h1M99 439.48h1M28 449.63h1M61 449.63h1M32 451.66h1M38 455.72h5M44 455.72h9M38 461.81h1M44 465.87h1M68 465.87h1M44 467.90h1M67 467.90h1M90 467.90h1M54 471.96h7M62 471.96h8M44 478.05h1M64 478.05h1M119 478.05h1M44 480.08h1M67 480.08h1M90 480.08h1M54 484.14h7M62 484.14h8M28 498.35h1M61 498.35h1M32 500.38h1M38 504.44h5M44 504.44h9M38 510.53h1M44 514.59h1M68 514.59h1M44 516.62h1M67 516.62h1M90 516.62h1M54 520.68h7M62 520.68h8M44 526.77h1M55 526.77h1M101 526.77h1M28 536.92h1M60 536.92h1M32 538.95h1M38 543.01h5M44 543.01h8M38 549.10h1M44 553.16h1M68 553.16h1M44 555.19h1M67 555.19h1M90 555.19h1M54 559.25h7M62 559.25h8M44 565.34h1M64 565.34h1M118 565.34h1M44 567.37h1M67 567.37h1M90 567.37h1M54 571.43h7M62 571.43h8M28 585.64h1M57 585.64h1M32 587.67h1" stroke="#333" stroke-opacity="0.5" stroke-width="1.75" stroke-dasharray="1.2 0.6" fill="none"/></svg></div>
<div class="a" style="left:1849px;top:223px;width:43px;height:645px;background:#fff"></div>
<div class="a" style="left:1849px;top:223px;width:17px;height:2px;background:#3A3A3A"></div>
<div class="a" style="left:1849px;top:225px;width:8px;height:4px;background:#A3A3A3"></div>

<!-- messages -->
<div class="a" style="left:246px;top:889px;width:1657px;height:6px;background:#009A44"></div>
<div class="t" style="left:246.5px;top:909.7px;font-size:16px;font-weight:bold;letter-spacing:0.5px;color:#333">Сообщения<span style="font-weight:normal">:</span></div>
<svg class="a" style="left:1884px;top:914px" width="11" height="11" viewBox="0 0 11 11"><path d="M1 1 L10 10 M10 1 L1 10" stroke="#6E6E6E" stroke-width="1.5"/></svg>
<div class="a" style="left:246px;top:941px;width:1657px;height:35px;border:1px solid #A8A8A8;background:#FCE38E;box-shadow:inset 0 1px 0 #fff,inset 0 -2px 0 #fff"></div>
<div class="a" style="left:260px;top:957.5px;width:14.5px;height:3px;background:#2AA8E0"></div>
<div class="t" style="left:287.5px;top:951.1px;font-size:16px;letter-spacing:-0.2px;color:#333">Схема данных сгенерирована</div>

<div class="a" style="left:0;top:993px;width:1919px;height:1px;background:#000"></div>
</body></html>
